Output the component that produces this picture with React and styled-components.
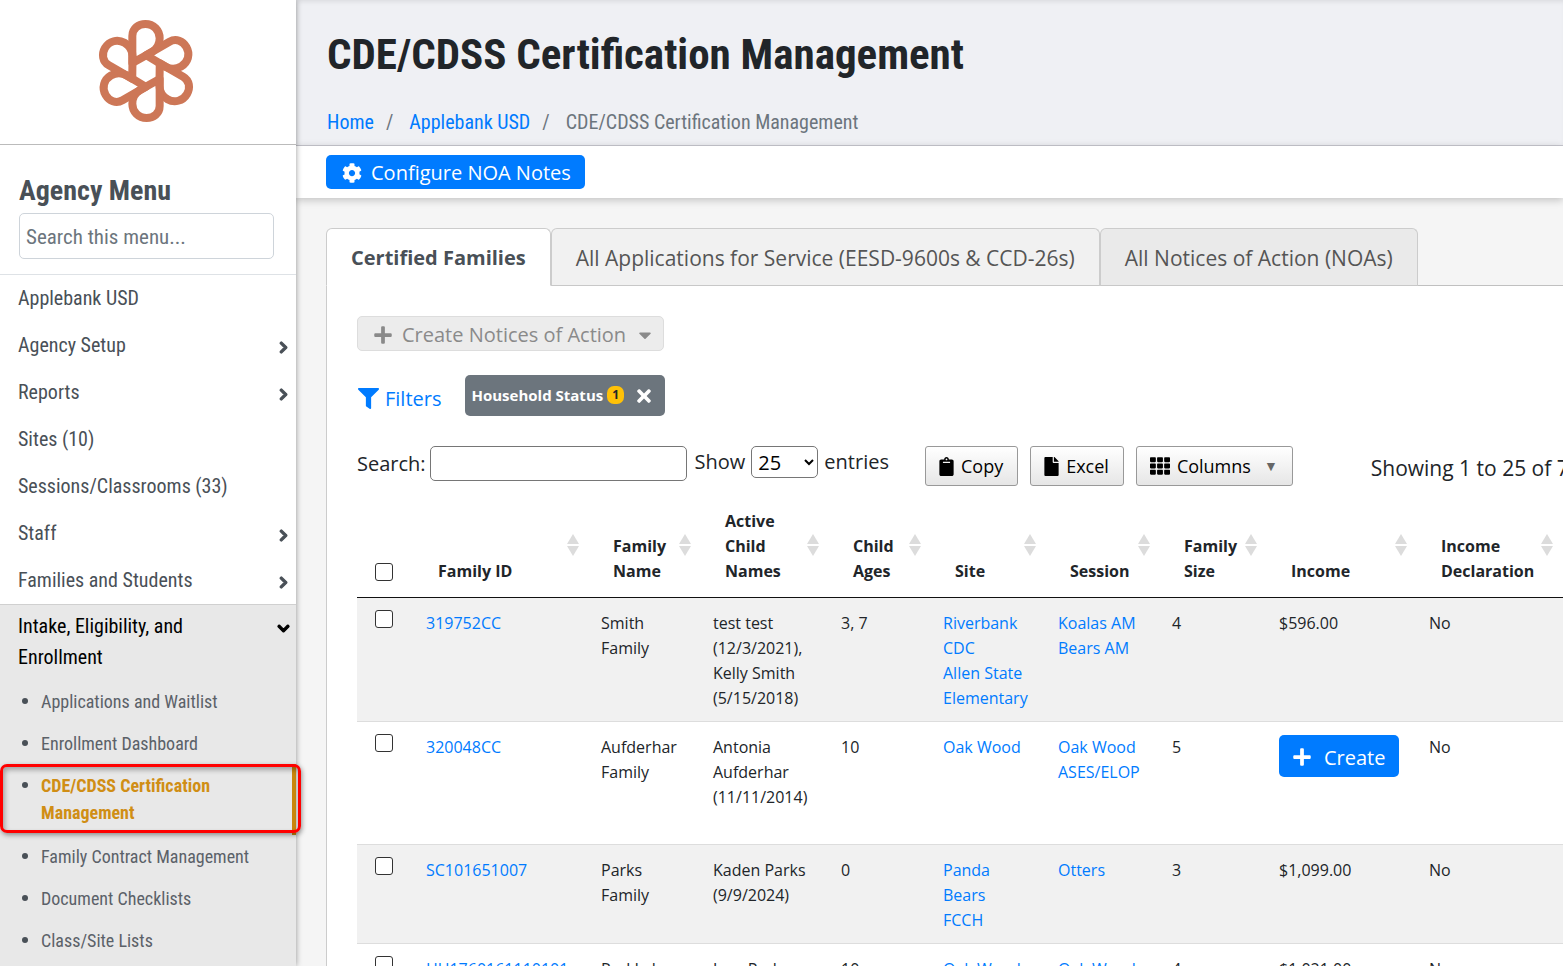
import React from "react"
import styled, { createGlobalStyle, css } from "styled-components"
import {
  FaCog,
  FaPlus,
  FaFilter,
  FaTimes,
  FaClipboard,
  FaFile,
  FaTh,
  FaChevronRight,
  FaChevronDown,
  FaCaretDown,
} from "react-icons/fa"

const condensed = `"Roboto Condensed", "Liberation Sans Narrow", Roboto, sans-serif`
const body = `"Open Sans", "Noto Sans", sans-serif`

const GlobalStyle = createGlobalStyle`
  * {
    box-sizing: border-box;
  }

  body {
    margin: 0;
    background: #f5f5f5;
    color: #212529;
    font-family: ${body};
    font-size: 20px;
    line-height: 28px;
  }

  a {
    color: #007bff;
    text-decoration: none;
  }

  button, input, select {
    font: inherit;
  }
`

const Shell = styled.div`
  display: flex;
  height: 100vh;
  overflow: hidden;
`

/* Sidebar */

const Sidebar = styled.aside`
  position: relative;
  z-index: 1;
  flex: 0 0 296px;
  background: #fff;
  box-shadow: 0 0 6px rgba(0, 0, 0, 0.4);
  font-family: ${condensed};
  font-size: 20px;
  color: #495057;
`

const LogoBox = styled.div`
  display: flex;
  justify-content: center;
  padding: 20px 4px 22px 0;
  border-bottom: 1px solid #bbb;
`

const MenuHead = styled.div`
  padding: 28px 22px 15px 19px;
  border-bottom: 1px solid #dee2e6;
`

const MenuTitle = styled.h2`
  margin: 0 0 4px;
  font-size: 28px;
  line-height: 36px;
  font-weight: 700;
`

const MenuSearch = styled.input`
  display: block;
  width: 100%;
  height: 46px;
  padding: 2px 6px 0;
  border: 1px solid #ced4da;
  border-radius: 5px;
  color: #495057;
  font-size: 21px;

  &::placeholder {
    color: #6c757d;
    opacity: 1;
  }
`

const MenuList = styled.ul`
  margin: 0;
  padding: 0;
  list-style: none;
`

const MenuLink = styled.a`
  display: flex;
  justify-content: space-between;
  align-items: flex-start;
  padding: ${(p) => (p.$open ? "6px 6px 7px 18px" : "8px 6px 8px 18px")};
  line-height: 31px;
  color: ${(p) => (p.$open ? "#000" : "#495057")};

  svg {
    flex: none;
    width: 13px;
    height: 13px;
    margin-top: 11px;
    stroke: currentColor;
    stroke-width: 50;
  }
`

const MenuSection = styled.li`
  border-top: 1px solid #d0d0d0;
  background: #e8e8e8;
`

const SubList = styled.ul`
  margin: 0;
  padding: 0 0 40px;
  list-style: none;
`

const SubItem = styled.li`
  position: relative;
  padding: 8px 40px ${(p) => (p.$active ? 9 : 7)}px 41px;
  font-size: 18px;
  line-height: 27px;

  &::before {
    content: "";
    position: absolute;
    top: 18px;
    left: 22px;
    width: 6px;
    height: 6px;
    border-radius: 50%;
    background: #495057;
  }

  a {
    color: ${(p) => (p.$active ? "#d08e15" : "#5b6168")};
    font-weight: ${(p) => (p.$active ? 700 : 400)};
  }

  ${(p) =>
    p.$active &&
    css`
      border-right: 4px solid #c9860c;
    `}
`

const Highlight = styled.span`
  position: absolute;
  inset: 0 -9px 2px 0;
  border: 3px solid #f00;
  border-radius: 7px;
  box-shadow: 1px 2px 5px rgba(0, 0, 0, 0.4),
    inset 2px 3px 5px rgba(0, 0, 0, 0.3);
  pointer-events: none;
`

/* Page */

const Page = styled.main`
  flex: 1;
  min-width: 0;
`

const PageHeader = styled.header`
  padding: 26px 31px 9px;
  background: #eff0f4;
  border-bottom: 1px solid #c8c8d0;
  box-shadow: inset 0 4px 4px -2px rgba(0, 0, 0, 0.08);
  font-family: ${condensed};
`

const PageTitle = styled.h1`
  margin: 0 0 26px;
  font-size: 43px;
  line-height: 56px;
  font-weight: 700;
`

const Breadcrumb = styled.nav`
  display: flex;
  gap: 12px;
  font-size: 20px;
  line-height: 28px;
  color: #6c757d;
`

const Slash = styled.span`
  margin-right: 4px;
`

const ActionBar = styled.div`
  display: flex;
  padding: 9px 30px;
  background: #fff;
  box-shadow: 0 2px 8px rgba(0, 0, 0, 0.22);
`

const PrimaryButton = styled.button`
  display: inline-flex;
  align-items: center;
  gap: ${(p) => (p.$large ? 12 : 9)}px;
  height: ${(p) => (p.$large ? 42 : 34)}px;
  padding: 2px 14px 0 ${(p) => (p.$large ? 13 : 16)}px;
  border: 0;
  border-radius: 5px;
  background: #007bff;
  color: #fff;
  font-size: 20px;
`

const Content = styled.div`
  padding: 30px 0 0 30px;
`

const Tabs = styled.div`
  display: flex;
  border-bottom: 1px solid #c0c0c0;
`

const Tab = styled.button`
  height: 58px;
  margin-bottom: -1px;
  padding: 2px 24px 0;
  border: 1px solid #ccc;
  border-bottom-color: ${(p) => (p.$active ? "#fff" : "#c8c8c8")};
  border-radius: 6px 6px 0 0;
  background: ${(p) => (p.$active ? "#fff" : p.$dim ? "#eaeaea" : "#f1f1f1")};
  color: ${(p) => (p.$active ? "#495057" : "#555")};
  font-size: ${(p) => (p.$active ? 20 : 21)}px;
  font-weight: ${(p) => (p.$active ? 700 : 400)};
  white-space: nowrap;
`

const Panel = styled.section`
  min-height: 100vh;
  padding: 30px 0 0 30px;
  border-left: 1px solid #ccc;
  background: #fff;
`

const CreateNotices = styled.button`
  display: flex;
  align-items: center;
  gap: 9px;
  height: 35px;
  padding: 2px 8px 0 15px;
  border: 1px solid #ddd;
  border-radius: 5px;
  background: #ececec;
  color: #8a8a8a;
  font-size: 20px;
`

const FilterRow = styled.div`
  display: flex;
  gap: 24px;
  margin-top: 24px;
`

const FilterLink = styled.a`
  display: flex;
  align-items: center;
  gap: 6px;
  padding: 6px 0 0 1px;

  svg {
    width: 21px;
    height: 21px;
  }
`

const FilterChip = styled.span`
  display: flex;
  align-items: center;
  gap: 4px;
  height: 41px;
  padding: 0 11px 2px 6px;
  border-radius: 5px;
  background: #6c757d;
  color: #fff;
  font-size: 15px;
  font-weight: 700;
`

const Badge = styled.span`
  width: 17px;
  border-radius: 7px;
  background: #ffc107;
  color: #212529;
  font-size: 12px;
  line-height: 18px;
  text-align: center;
`

const ChipClose = styled.button`
  display: flex;
  margin-left: 6px;
  padding: 2px 0 0;
  border: 0;
  background: none;
  color: #fff;
  font-size: 20px;
`

const Controls = styled.div`
  display: flex;
  align-items: flex-start;
  margin-top: 30px;
  white-space: nowrap;
`

const Field = styled.label`
  display: flex;
  flex: none;
  align-items: center;
  gap: ${(p) => p.$gap}px;
  margin-right: 8px;
`

const SearchInput = styled.input`
  width: 257px;
  height: 35px;
  border: 1px solid #767676;
  border-radius: 5px;
`

const LengthSelect = styled.select`
  width: 67px;
  height: 32px;
  padding-left: 2px;
  border: 1px solid #767676;
  border-radius: 5px;
  background: #fff;
  color: #000;
`

const ToolButtons = styled.div`
  display: flex;
  gap: 12px;
  margin: 0 78px 0 28px;
`

const ToolButton = styled.button`
  display: flex;
  align-items: center;
  gap: 7px;
  height: 40px;
  padding: 0 14px 0 13px;
  border: 1px solid #999;
  border-radius: 3px;
  background: linear-gradient(#fff, #e6e6e6);
  color: #000;
  font-size: 18px;

  svg {
    width: ${(p) => (p.$wide ? 20 : 15)}px;
    height: ${(p) => (p.$wide ? 20 : 19)}px;
  }
`

const Arrow = styled.span`
  margin-left: 6px;
  color: #666;
  font-size: 14px;
`

const Summary = styled.span`
  margin-top: 8px;
  font-size: 21px;
`

const DataTable = styled.table`
  width: 100%;
  margin-top: 12px;
  border-collapse: separate;
  border-spacing: 0;
  table-layout: fixed;
  font-size: 16px;
  line-height: 25px;
`

const HeadCell = styled.th`
  padding: ${(p) => (p.$check ? "0 0 16px 18px" : "11px 12px 13px 24px")};
  border-bottom: 1px solid #111;
  text-align: left;
  vertical-align: bottom;
  font-weight: 700;
`

const SortHead = styled.div`
  display: flex;
  align-items: flex-end;
  justify-content: space-between;
  margin-right: -2px;

  svg {
    flex: none;
    margin-bottom: 28px;
  }
`

const Row = styled.tr`
  background: ${(p) => (p.$odd ? "#f1f1f1" : "#fff")};
`

const Cell = styled.td`
  padding: ${(p) => (p.$check ? "12px 0 0 18px" : "13px 12px 10px")};
  border-bottom: 1px solid #ddd;
  vertical-align: top;

  a {
    display: block;
    white-space: pre-line;
  }

  button {
    margin-bottom: 57px;
  }
`

const Checkbox = styled.input`
  display: block;
  appearance: none;
  width: 18px;
  height: 18px;
  margin: 0;
  border: 1px solid #333;
  border-radius: 3px;
  background: #fff;
`

const Logo = () => (
  <svg width="102" height="102" viewBox="-153 -153 306 306" aria-label="Logo">
    <g fill="none" stroke="#cd7757" strokeWidth="24" strokeLinejoin="round">
      {[0, 60, 120, 180, 240, 300].map((angle) => (
        <path
          key={angle}
          transform={`rotate(${angle})`}
          d="M-41 -24V-105C-41 -128 -22 -141 -2 -141C23 -141 41 -122 41 -98C41 -80 33 -66 18 -57Z"
        />
      ))}
    </g>
  </svg>
)

const SortIcon = () => (
  <svg width="12" height="22" viewBox="0 0 12 22" fill="#dcdcdc">
    <path d="M6 0L12 10H0Z" />
    <path d="M6 22L12 12H0Z" />
  </svg>
)

const menu = [
  { label: "Applebank USD" },
  { label: "Agency Setup", nested: true },
  { label: "Reports", nested: true },
  { label: "Sites (10)" },
  { label: "Sessions/Classrooms (33)" },
  { label: "Staff", nested: true },
  { label: "Families and Students", nested: true },
]

const subMenu = [
  "Applications and Waitlist",
  "Enrollment Dashboard",
  "CDE/CDSS Certification Management",
  "Family Contract Management",
  "Document Checklists",
  "Class/Site Lists",
]

const current = "CDE/CDSS Certification Management"

const columns = [
  { label: "Family ID", width: 175 },
  { label: "Family Name", width: 112 },
  { label: "Active Child Names", width: 128 },
  { label: "Child Ages", width: 102 },
  { label: "Site", width: 115 },
  { label: "Session", width: 114 },
  { label: "Family Size", width: 107 },
  { label: "Income", width: 150 },
  { label: "Income Declaration" },
]

const families = [
  {
    id: "319752CC",
    name: "Smith Family",
    children: "test test (12/3/2021), Kelly Smith (5/15/2018)",
    ages: "3, 7",
    sites: ["Riverbank CDC", "Allen State Elementary"],
    sessions: ["Koalas AM", "Bears AM"],
    size: 4,
    income: "$596.00",
  },
  {
    id: "320048CC",
    name: "Aufderhar Family",
    children: "Antonia Aufderhar (11/11/2014)",
    ages: "10",
    sites: ["Oak Wood"],
    sessions: ["Oak Wood ASES/ELOP"],
    size: 5,
  },
  {
    id: "SC101651007",
    name: "Parks Family",
    children: "Kaden Parks (9/9/2024)",
    ages: "0",
    sites: ["Panda\nBears\nFCCH"],
    sessions: ["Otters"],
    size: 3,
    income: "$1,099.00",
  },
  {
    id: "HU1760161110101",
    name: "Rod Lake",
    children: "Jose Parker",
    ages: "10",
    sites: ["Oak Wood"],
    sessions: ["Oak Wood"],
    size: 4,
    income: "$1,021.00",
  },
]

const Links = ({ items }) =>
  items.map((item) => (
    <a href="#" key={item}>
      {item}
    </a>
  ))

const SideMenu = () => (
  <Sidebar>
    <LogoBox>
      <Logo />
    </LogoBox>
    <MenuHead>
      <MenuTitle>Agency Menu</MenuTitle>
      <MenuSearch placeholder="Search this menu..." aria-label="Search this menu" />
    </MenuHead>
    <MenuList>
      {menu.map(({ label, nested }) => (
        <li key={label}>
          <MenuLink href="#">
            {label}
            {nested && <FaChevronRight />}
          </MenuLink>
        </li>
      ))}
      <MenuSection>
        <MenuLink href="#" $open>
          <span>
            Intake, Eligibility, and
            <br />
            Enrollment
          </span>
          <FaChevronDown />
        </MenuLink>
        <SubList>
          {subMenu.map((label) => (
            <SubItem key={label} $active={label === current}>
              <a href="#">{label}</a>
              {label === current && <Highlight />}
            </SubItem>
          ))}
        </SubList>
      </MenuSection>
    </MenuList>
  </Sidebar>
)

const TableControls = () => (
  <Controls>
    <Field $gap={4}>
      Search:
      <SearchInput type="search" />
    </Field>
    <Field $gap={6}>
      Show
      <LengthSelect defaultValue="25">
        <option>10</option>
        <option>25</option>
        <option>50</option>
      </LengthSelect>
      entries
    </Field>
    <ToolButtons>
      <ToolButton>
        <FaClipboard />
        Copy
      </ToolButton>
      <ToolButton>
        <FaFile />
        Excel
      </ToolButton>
      <ToolButton $wide>
        <FaTh />
        Columns
        <Arrow>▼</Arrow>
      </ToolButton>
    </ToolButtons>
    <Summary>Showing 1 to 25 of 7</Summary>
  </Controls>
)

const FamilyTable = () => (
  <DataTable>
    <colgroup>
      <col width="57" />
      {columns.map(({ label, width }) => (
        <col key={label} width={width} />
      ))}
    </colgroup>
    <thead>
      <tr>
        <HeadCell $check>
          <Checkbox type="checkbox" aria-label="Select all families" />
        </HeadCell>
        {columns.map(({ label }) => (
          <HeadCell key={label}>
            <SortHead>
              {label}
              <SortIcon />
            </SortHead>
          </HeadCell>
        ))}
      </tr>
    </thead>
    <tbody>
      {families.map((family, i) => (
        <Row key={family.id} $odd={i % 2 === 0}>
          <Cell $check>
            <Checkbox type="checkbox" aria-label={`Select ${family.name}`} />
          </Cell>
          <Cell>
            <a href="#">{family.id}</a>
          </Cell>
          <Cell>{family.name}</Cell>
          <Cell>{family.children}</Cell>
          <Cell>{family.ages}</Cell>
          <Cell>
            <Links items={family.sites} />
          </Cell>
          <Cell>
            <Links items={family.sessions} />
          </Cell>
          <Cell>{family.size}</Cell>
          <Cell>
            {family.income || (
              <PrimaryButton $large>
                <FaPlus />
                Create
              </PrimaryButton>
            )}
          </Cell>
          <Cell>No</Cell>
        </Row>
      ))}
    </tbody>
  </DataTable>
)

const App = () => {
  return (
    <Shell>
      <GlobalStyle />
      <SideMenu />
      <Page>
        <PageHeader>
          <PageTitle>CDE/CDSS Certification Management</PageTitle>
          <Breadcrumb>
            <a href="#">Home</a>
            <Slash>/</Slash>
            <a href="#">Applebank USD</a>
            <Slash>/</Slash>
            <span>{current}</span>
          </Breadcrumb>
        </PageHeader>
        <ActionBar>
          <PrimaryButton>
            <FaCog />
            Configure NOA Notes
          </PrimaryButton>
        </ActionBar>
        <Content>
          <Tabs>
            <Tab $active>Certified Families</Tab>
            <Tab>All Applications for Service (EESD-9600s &amp; CCD-26s)</Tab>
            <Tab $dim>All Notices of Action (NOAs)</Tab>
          </Tabs>
          <Panel>
            <CreateNotices disabled>
              <FaPlus />
              Create Notices of Action
              <FaCaretDown />
            </CreateNotices>
            <FilterRow>
              <FilterLink href="#">
                <FaFilter />
                Filters
              </FilterLink>
              <FilterChip>
                Household Status
                <Badge>1</Badge>
                <ChipClose aria-label="Remove filter">
                  <FaTimes />
                </ChipClose>
              </FilterChip>
            </FilterRow>
            <TableControls />
            <FamilyTable />
          </Panel>
        </Content>
      </Page>
    </Shell>
  )
}

export default App
